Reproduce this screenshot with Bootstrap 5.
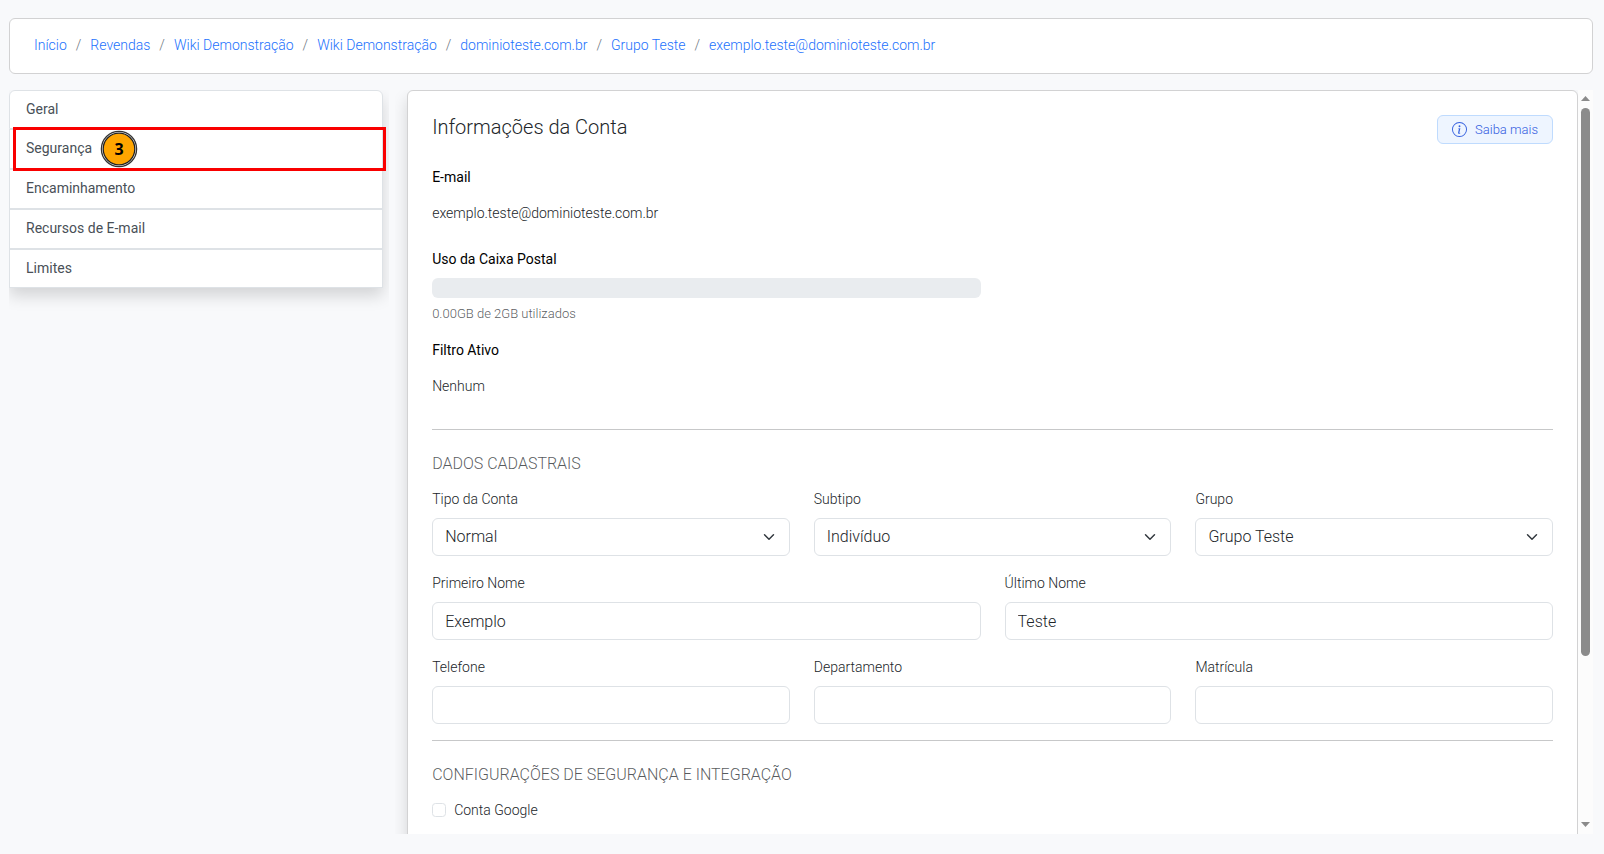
<!DOCTYPE html>
<html lang="pt-BR">
<head>
<meta charset="utf-8">
<meta name="viewport" content="width=device-width, initial-scale=1">
<title>Informações da Conta</title>
<link href="https://cdn.jsdelivr.net/npm/bootstrap@5.3.0/dist/css/bootstrap.min.css" rel="stylesheet">
<style>
  body { background: #f8f9fb; font-family: Roboto, sans-serif; font-weight: 300; font-size: 14px; line-height: 22px; color: #212529; }
  .app-shell { padding: 18px 11px 20px 9px; gap: 16px; }
  .crumb-box { --bs-border-color: #d2d2d3; padding: 15px 24px 17px; }
  .breadcrumb { --bs-breadcrumb-item-padding-x: 9px; --bs-breadcrumb-divider-color: #6c757d; font-size: 14px; }
  .breadcrumb a { color: #1c71fd; text-decoration: none; }
  .side-pane { flex: 0 0 24%; padding-right: 6px; overflow: hidden; }
  .side-list { box-shadow: 0 8px 16px rgba(0,0,0,.15); border-radius: 6px 6px 0 0; }
  .side-item { display: block; background: #fff; border: 1px solid #dee2e6; padding: 7px 16px; height: 40px; color: #495057; font-weight: 400; text-decoration: none; }
  .side-item:first-child { border-radius: 6px 6px 0 0; height: 39px; }
  .side-item:last-child { height: 39px; }
  .step-frame { position: absolute; inset: -3px -4px -3px 3px; border: 3px solid #f90000; z-index: 2; }
  .step-mark { position: absolute; left: 90px; top: 0; z-index: 3; width: 38px; height: 38px; }
  .main-pane { overflow-y: auto; scrollbar-width: none; margin-left: 6px; padding-left: 12px; }
  .main-pane::-webkit-scrollbar { display: none; }
  .account-card { --bs-border-color: #d2d2d3; padding: 24px; box-shadow: 0 8px 16px rgba(0,0,0,.15); min-height: 1000px; }
  .page-title { font-size: 20px; line-height: 24px; font-weight: 300; }
  .help-btn { background: #eef5ff; border: 1px solid #bfdbfe; color: #3560df; border-radius: 6px; font-size: 13px; line-height: 19px; padding: 4px 14px; font-weight: 300; }
  .help-btn:hover { background: #dbeafe; color: #3560df; border-color: #bfdbfe; }
  .card-head { margin-bottom: 22px; }
  .field-title { font-size: 14px; line-height: 22px; font-weight: 400; color: #000; margin: 0; }
  .field-value { margin: 14px 0 24px; }
  .progress { height: 20px; background: #e9ecef; }
  .usage-note { font-size: 13px; line-height: 19px; margin: 6px 0 16px; color: rgba(33,37,41,.75); }
  .rule { border: 0; border-top: 1px solid #c7c8c9; opacity: 1; }
  .section-title { font-size: 16px; line-height: 20px; font-weight: 300; color: rgba(33,37,41,.75); margin-bottom: 14px; }
  .form-label { margin-bottom: 8px; display: block; }
  .form-control, .form-select { font-weight: 300; border-color: #dee2e6; height: 38px; font-size: 16px; line-height: 24px; }
  .form-check-input { width: 14px; height: 14px; border-color: #dee2e6; }
  .bar-track { width: 15px; background: #fcfcfc; padding: 6px 0 7px; }
  .bar-thumb { width: 9px; height: 75%; border-radius: 5px; background: #8b8b8b; margin: 7px 0 auto; }
</style>
</head>
<body>
<div class="app-shell vh-100 d-flex flex-column">
  <nav class="crumb-box bg-white border rounded" aria-label="breadcrumb">
    <ol class="breadcrumb mb-0">
      <li class="breadcrumb-item"><a href="#">Início</a></li>
      <li class="breadcrumb-item"><a href="#">Revendas</a></li>
      <li class="breadcrumb-item"><a href="#">Wiki Demonstração</a></li>
      <li class="breadcrumb-item"><a href="#">Wiki Demonstração</a></li>
      <li class="breadcrumb-item"><a href="#">dominioteste.com.br</a></li>
      <li class="breadcrumb-item"><a href="#">Grupo Teste</a></li>
      <li class="breadcrumb-item"><a href="#">exemplo.teste@dominioteste.com.br</a></li>
    </ol>
  </nav>

  <div class="d-flex flex-grow-1 overflow-hidden">
    <aside class="side-pane">
      <nav class="side-list">
        <a class="side-item" href="#">Geral</a>
        <a class="side-item position-relative" href="#">Segurança
          <span class="step-frame"></span>
          <svg class="step-mark" viewBox="0 0 38 38" aria-hidden="true">
            <circle cx="19" cy="19" r="17.6" fill="#fff" stroke="#333" stroke-width="1.3"/>
            <circle cx="19" cy="19" r="15.8" fill="#ffa500" stroke="#222" stroke-width="1.3"/>
            <text x="19" y="25" text-anchor="middle" font-family="Open Sans, sans-serif" font-size="16" font-weight="700" fill="#000">3</text>
          </svg>
        </a>
        <a class="side-item" href="#">Encaminhamento</a>
        <a class="side-item" href="#">Recursos de E-mail</a>
        <a class="side-item" href="#">Limites</a>
      </nav>
    </aside>

    <main class="main-pane flex-grow-1">
      <form class="account-card bg-white border rounded">
        <div class="card-head d-flex justify-content-between align-items-start">
          <h1 class="page-title mb-0">Informações da Conta</h1>
          <button type="button" class="help-btn btn d-flex align-items-center gap-2">
            <svg width="15" height="15" viewBox="0 0 16 16" fill="currentColor" aria-hidden="true"><path d="M8 15A7 7 0 1 1 8 1a7 7 0 0 1 0 14m0 1A8 8 0 1 0 8 0a8 8 0 0 0 0 16"/><path d="m8.930 6.588-2.290.287-.082.380.450.083c.294.070.352.176.288.469l-.738 3.468c-.194.897.105 1.319.808 1.319.545 0 1.178-.252 1.465-.598l.088-.416c-.200.176-.492.246-.686.246-.275 0-.375-.193-.304-.533zM9 4.500a1 1 0 1 1-2 0 1 1 0 0 1 2 0"/></svg>
            Saiba mais
          </button>
        </div>

        <div class="row">
          <div class="col-6">
            <h2 class="field-title">E-mail</h2>
            <p class="field-value">exemplo.teste@dominioteste.com.br</p>
            <h2 class="field-title mb-2">Uso da Caixa Postal</h2>
            <div class="progress" role="progressbar" aria-label="Uso da Caixa Postal" aria-valuenow="0" aria-valuemin="0" aria-valuemax="100"><div class="progress-bar" style="width:0%"></div></div>
            <div class="usage-note">0.00GB de 2GB utilizados</div>
            <h2 class="field-title">Filtro Ativo</h2>
            <p class="field-value">Nenhum</p>
          </div>
        </div>

        <hr class="rule mt-2 mb-4">
        <h2 class="section-title">DADOS CADASTRAIS</h2>
        <div class="row mb-3">
          <div class="col-4"><label class="form-label" for="tipo">Tipo da Conta</label><select class="form-select" id="tipo"><option>Normal</option></select></div>
          <div class="col-4"><label class="form-label" for="subtipo">Subtipo</label><select class="form-select" id="subtipo"><option>Indivíduo</option></select></div>
          <div class="col-4"><label class="form-label" for="grupo">Grupo</label><select class="form-select" id="grupo"><option>Grupo Teste</option></select></div>
        </div>
        <div class="row mb-3">
          <div class="col-6"><label class="form-label" for="nome">Primeiro Nome</label><input class="form-control" id="nome" type="text" value="Exemplo"></div>
          <div class="col-6"><label class="form-label" for="sobrenome">Último Nome</label><input class="form-control" id="sobrenome" type="text" value="Teste"></div>
        </div>
        <div class="row">
          <div class="col-4"><label class="form-label" for="fone">Telefone</label><input class="form-control" id="fone" type="text"></div>
          <div class="col-4"><label class="form-label" for="depto">Departamento</label><input class="form-control" id="depto" type="text"></div>
          <div class="col-4"><label class="form-label" for="matricula">Matrícula</label><input class="form-control" id="matricula" type="text"></div>
        </div>
        <hr class="rule mt-3 mb-4">
        <h2 class="section-title">CONFIGURAÇÕES DE SEGURANÇA E INTEGRAÇÃO</h2>
        <div class="d-flex align-items-center gap-2">
          <input class="form-check-input m-0" type="checkbox" id="google">
          <label for="google">Conta Google</label>
        </div>
      </form>
    </main>
    <div class="bar-track d-flex flex-column align-items-center flex-shrink-0" aria-hidden="true">
      <svg width="9" height="5" viewBox="0 0 9 5"><path d="M0 5 4.500 0 9 5z" fill="#8b8b8b"/></svg>
      <div class="bar-thumb"></div>
      <svg width="9" height="5" viewBox="0 0 9 5"><path d="M0 0 4.500 5 9 0z" fill="#8b8b8b"/></svg>
    </div>
  </div>
</div>
<script src="https://cdn.jsdelivr.net/npm/bootstrap@5.3.0/dist/js/bootstrap.bundle.min.js"></script>
</body>
</html>
